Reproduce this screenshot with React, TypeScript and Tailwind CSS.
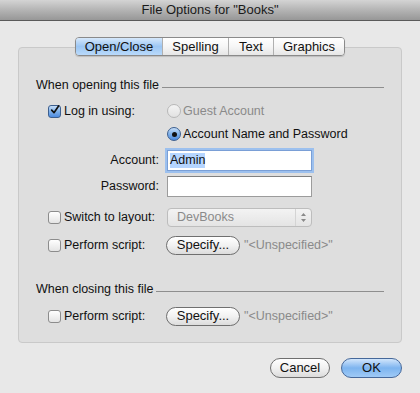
const font = { fontFamily: '"Liberation Sans", Arial, sans-serif' }

function Checkbox({ checked = false }: { checked?: boolean }) {
  return (
    <span
      className={
        'w-[13px] h-[13px] rounded-[3px] border flex items-center justify-center shrink-0 ' +
        (checked
          ? 'border-[#3c5f8f] bg-gradient-to-b from-[#c5ddf7] via-[#7fb1ea] to-[#4d8be0]'
          : 'border-[#8c8c8c] bg-gradient-to-b from-white to-[#e4e4e4]')
      }
    >
      {checked && (
        <svg width="12" height="12" viewBox="0 0 12 12" className="-mt-[2px] ml-[1px]">
          <path d="M2 6.2 L4.8 9.2 L10.5 1" fill="none" stroke="#111" strokeWidth="2" strokeLinecap="round" strokeLinejoin="round" />
        </svg>
      )}
    </span>
  )
}

function Radio({ on = false, disabled = false }: { on?: boolean; disabled?: boolean }) {
  return (
    <span
      className={
        'w-[14px] h-[14px] rounded-full border flex items-center justify-center shrink-0 ' +
        (on
          ? 'border-[#3c5f8f] bg-gradient-to-b from-[#c5ddf7] via-[#7fb1ea] to-[#4d8be0]'
          : disabled
            ? 'border-[#b8b8b8] bg-gradient-to-b from-[#f4f4f4] to-[#e2e2e2]'
            : 'border-[#8c8c8c] bg-white')
      }
    >
      {on && <span className="w-[5px] h-[5px] rounded-full bg-[#111]" />}
    </span>
  )
}

function PillButton({ children, blue = false, className = '' }: { children: React.ReactNode; blue?: boolean; className?: string }) {
  return (
    <button
      className={
        'h-[19px] rounded-full border flex items-center justify-center text-[13px] text-[#111] ' +
        (blue
          ? 'border-[#46689a] bg-gradient-to-b from-[#d2e6fb] via-[#7db4ef] to-[#9fcaf6]'
          : 'border-[#6f6f6f] bg-gradient-to-b from-white via-[#f1f1f1] to-[#dcdcdc]') +
        ' ' +
        className
      }
    >
      {children}
    </button>
  )
}

function Heading({ text }: { text: string }) {
  return (
    <div className="h-4 flex items-center pl-[17px] pr-[17px] gap-[3px] text-[12.5px] text-[#111]">
      <span>{text}</span>
      <span className="flex-1 h-px bg-[#8e8e8e] mt-[5px]" />
    </div>
  )
}

export default function App() {
  const tabs = ['Open/Close', 'Spelling', 'Text', 'Graphics']
  const widths = ['w-[86px]', 'w-[66px]', 'w-[45px]', 'w-[71px]']

  return (
    <div style={font} className="w-[420px] h-[393px] bg-[#e8e8e8] flex flex-col overflow-hidden">
      <div className="h-[21px] shrink-0 bg-gradient-to-b from-[#d4d4d4] via-[#b4b4b4] to-[#979797] border-b border-[#5a5a5a] flex items-center justify-center text-[13px] text-[#1a1a1a]">
        File Options for "Books"
      </div>

      <div className="px-[18px] pt-[16px] flex flex-col">
        <div className="flex justify-center relative z-10">
          <div className="flex h-[19px] rounded-[4px] border border-[#8a8a8a] overflow-hidden shadow-[0_1px_1px_rgba(0,0,0,0.15)]">
            {tabs.map((t, i) => (
              <div
                key={t}
                className={
                  widths[i] +
                  ' flex items-center justify-center text-[13px] text-[#111] ' +
                  (i > 0 ? 'border-l border-[#b0b0b0] ' : '') +
                  (i === 0
                    ? 'bg-gradient-to-b from-[#d6e8fb] via-[#9cc6f3] to-[#b9dafb]'
                    : 'bg-gradient-to-b from-white via-[#f6f6f6] to-[#e6e6e6]')
                }
              >
                {t}
              </div>
            ))}
          </div>
        </div>

        <div className="-mt-[9px] h-[296px] rounded-[4px] border border-[#c9c9c9] bg-[#dedede] pt-[29px] flex flex-col text-[12.5px] text-[#111]">
          <Heading text="When opening this file" />

          <div className="mt-[8px] h-5 flex items-center">
            <div className="w-[148px] pl-[29px] flex items-center gap-[3px]">
              <Checkbox checked />
              <span>Log in using:</span>
            </div>
            <div className="flex items-center gap-[2px] text-[#8a8a8a]">
              <Radio disabled />
              <span>Guest Account</span>
            </div>
          </div>

          <div className="mt-[3px] h-5 flex items-center">
            <div className="w-[148px]" />
            <div className="flex items-center gap-[2px]">
              <Radio on />
              <span>Account Name and Password</span>
            </div>
          </div>

          <div className="mt-[6px] h-[21px] flex items-center">
            <div className="w-[140px] text-right">Account:</div>
            <div className="ml-[8px] w-[145px] h-[21px] bg-white border border-[#7a9fd6] shadow-[0_0_0_2px_#9cc0ee] flex items-center px-[2px]">
              <span className="bg-[#b5d5ff] leading-[15px]">Admin</span>
            </div>
          </div>

          <div className="mt-[5px] h-[21px] flex items-center">
            <div className="w-[140px] text-right">Password:</div>
            <div className="ml-[8px] w-[145px] h-[21px] bg-white border border-[#9c9c9c] border-t-[#808080]" />
          </div>

          <div className="mt-[10px] h-5 flex items-center">
            <div className="w-[148px] pl-[29px] flex items-center gap-[3px]">
              <Checkbox />
              <span>Switch to layout:</span>
            </div>
            <div className="w-[145px] h-[19px] rounded-[4px] border border-[#bdbdbd] bg-gradient-to-b from-[#f3f3f3] to-[#e4e4e4] flex items-center text-[#8a8a8a]">
              <span className="flex-1 pl-[9px]">DevBooks</span>
              <span className="w-[16px] h-full border-l border-[#d4d4d4] flex items-center justify-center">
                <svg width="7" height="11" viewBox="0 0 7 11">
                  <path d="M3.5 1 L6 4 L1 4 Z M3.5 10 L6 7 L1 7 Z" fill="#8a8a8a" />
                </svg>
              </span>
            </div>
          </div>

          <div className="mt-[8px] h-5 flex items-center">
            <div className="w-[147px] pl-[29px] flex items-center gap-[3px]">
              <Checkbox />
              <span>Perform script:</span>
            </div>
            <PillButton className="w-[74px]">Specify...</PillButton>
            <span className="ml-[4px] text-[#8a8a8a]">"&lt;Unspecified&gt;"</span>
          </div>

          <div className="mt-[26px]">
            <Heading text="When closing this file" />
          </div>

          <div className="mt-[9px] h-5 flex items-center">
            <div className="w-[147px] pl-[29px] flex items-center gap-[3px]">
              <Checkbox />
              <span>Perform script:</span>
            </div>
            <PillButton className="w-[74px]">Specify...</PillButton>
            <span className="ml-[4px] text-[#8a8a8a]">"&lt;Unspecified&gt;"</span>
          </div>
        </div>

        <div className="mt-[15px] flex justify-end gap-[11px]">
          <PillButton className="w-[60px] h-[20px]">Cancel</PillButton>
          <PillButton blue className="w-[61px] h-[20px]">OK</PillButton>
        </div>
      </div>
    </div>
  )
}
